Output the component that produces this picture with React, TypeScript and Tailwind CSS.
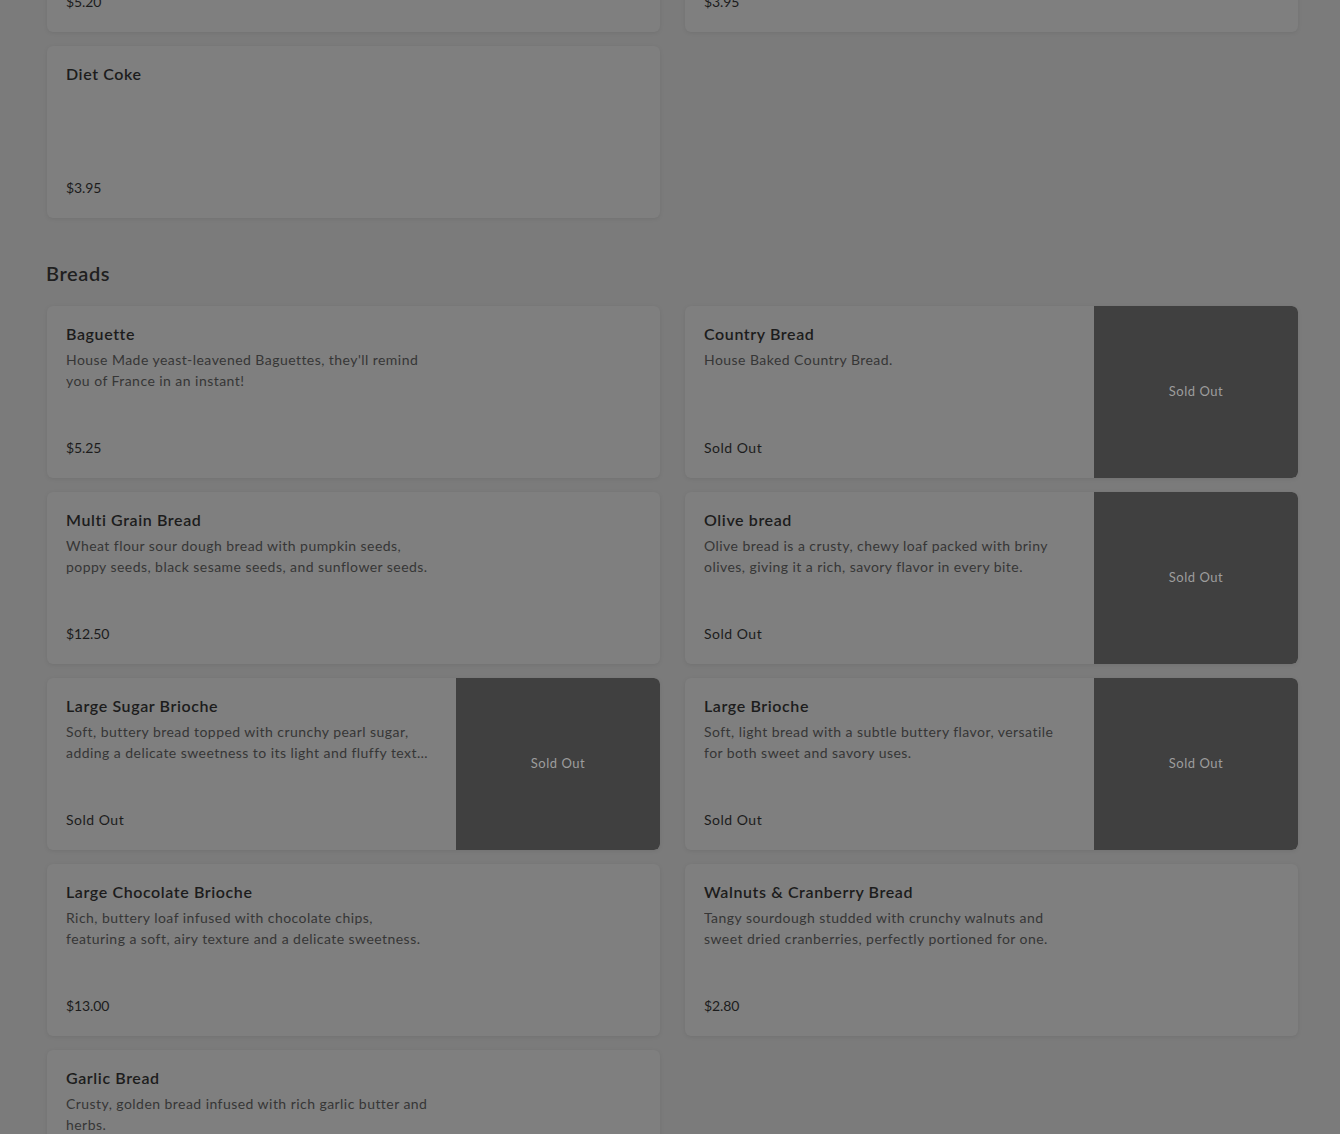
type Item = {
  name: string
  description?: string
  price?: string
  soldOut?: boolean
  image?: boolean
}

const drinks: Item[] = [
  { name: 'Iced Tea', price: '$5.20' },
  { name: 'Coke', price: '$3.95' },
  { name: 'Diet Coke', price: '$3.95' },
]

const breads: Item[] = [
  {
    name: 'Baguette',
    description: "House Made yeast-leavened Baguettes, they'll remind you of France in an instant!",
    price: '$5.25',
  },
  { name: 'Country Bread', description: 'House Baked Country Bread.', soldOut: true, image: true },
  {
    name: 'Multi Grain Bread',
    description: 'Wheat flour sour dough bread with pumpkin seeds, poppy seeds, black sesame seeds, and sunflower seeds.',
    price: '$12.50',
  },
  {
    name: 'Olive bread',
    description: 'Olive bread is a crusty, chewy loaf packed with briny olives, giving it a rich, savory flavor in every bite.',
    soldOut: true,
    image: true,
  },
  {
    name: 'Large Sugar Brioche',
    description: 'Soft, buttery bread topped with crunchy pearl sugar, adding a delicate sweetness to its light and fluffy text…',
    soldOut: true,
    image: true,
  },
  {
    name: 'Large Brioche',
    description: 'Soft, light bread with a subtle buttery flavor, versatile for both sweet and savory uses.',
    soldOut: true,
    image: true,
  },
  {
    name: 'Large Chocolate Brioche',
    description: 'Rich, buttery loaf infused with chocolate chips, featuring a soft, airy texture and a delicate sweetness.',
    price: '$13.00',
  },
  {
    name: 'Walnuts & Cranberry Bread',
    description: 'Tangy sourdough studded with crunchy walnuts and sweet dried cranberries, perfectly portioned for one.',
    price: '$2.80',
  },
  {
    name: 'Garlic Bread',
    description: 'Crusty, golden bread infused with rich garlic butter and herbs.',
    price: '$6.50',
  },
]

function MenuCard({ item }: { item: Item }) {
  return (
    <div className="flex h-[172px] overflow-hidden rounded-md bg-[#7f7f7f] shadow-[0_1px_4px_rgba(0,0,0,0.08)]">
      <div className="flex w-[409px] flex-col justify-between pb-5 pl-[19px] pr-5 pt-4">
        <div>
          <h3 className="text-base leading-6 font-semibold tracking-[0.6px] text-[#1c1c1c]">{item.name}</h3>
          {item.description && (
            <p className="mt-[3px] line-clamp-2 text-sm leading-[21px] tracking-[0.45px] text-[#363636]">
              {item.description}
            </p>
          )}
        </div>
        <span className={`text-sm leading-5 text-[#1c1c1c] ${item.soldOut ? 'tracking-[0.5px]' : 'tracking-[-0.1px]'}`}>
          {item.soldOut ? 'Sold Out' : item.price}
        </span>
      </div>
      {item.image && (
        <div className="ml-auto flex w-[204px] items-center justify-center rounded-r-md bg-[#404040]">
          <span className="text-[13px] tracking-[0.5px] text-[#9d9d9d]">Sold Out</span>
        </div>
      )}
    </div>
  )
}

export default function App() {
  return (
    <div
      className="h-[1134px] overflow-hidden bg-[#7b7b7b] pl-[47px] pr-[42px]"
      style={{ fontFamily: 'Lato, "Noto Sans", sans-serif' }}
    >
      <div className="-mt-[140px]">
        <div className="grid grid-cols-2 gap-x-[25px] gap-y-[14px]">
          {drinks.map((item) => (
            <MenuCard key={item.name} item={item} />
          ))}
        </div>

        <h2 className="mb-[19px] -ml-px mt-[41px] text-xl leading-7 font-semibold tracking-[0.6px] text-[#1f1f1f]">
          Breads
        </h2>
        <div className="grid grid-cols-2 gap-x-[25px] gap-y-[14px]">
          {breads.map((item) => (
            <MenuCard key={item.name} item={item} />
          ))}
        </div>
      </div>
    </div>
  )
}
